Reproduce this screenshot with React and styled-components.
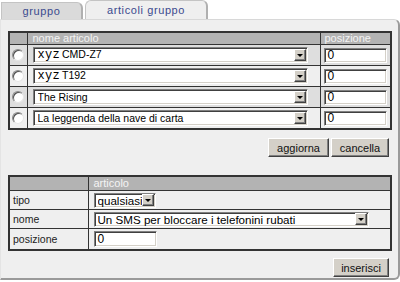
import React from "react";
import styled, { createGlobalStyle } from "styled-components";

const GlobalStyle = createGlobalStyle`
  body {
    margin: 0;
    background: #ffffff;
    font-family: "Liberation Sans", Arial, sans-serif;
  }
`;

const Page = styled.div`
  width: 400px;
  height: 282px;
  overflow: hidden;
`;

const TabBar = styled.div`
  display: flex;
  align-items: flex-end;
  height: 19px;
  padding-left: 1px;
`;

const Tab = styled.div`
  display: flex;
  align-items: center;
  justify-content: center;
  box-sizing: border-box;
  width: ${(p) => p.w}px;
  height: ${(p) => (p.active ? 19 : 17)}px;
  margin-right: 2px;
  background: ${(p) => (p.active ? "#efefef" : "#dadada")};
  border: 1px solid #c4c4c4;
  border-bottom: none;
  border-right: 2px solid #b0b0b0;
  border-radius: ${(p) => (p.active ? "6px 6px 0 0" : "0 6px 0 0")};
  color: #3b4a8e;
  font-size: 11px;
  letter-spacing: 0.6px;
  padding-bottom: 1px;
`;

const Panel = styled.div`
  box-sizing: border-box;
  width: 400px;
  height: 261px;
  background: #efefef;
  border-top: 1px solid #d8d8d8;
  border-left: 1px solid #e4e4e4;
  border-right: 2px solid #9a9a9a;
  border-bottom: 2px solid #9a9a9a;
  border-radius: 0 6px 6px 0;
  padding: 11px 7px 0 7px;
`;

const Grid = styled.table`
  width: 382px;
  border-collapse: collapse;
  border: 2px solid #333;
  table-layout: fixed;
`;

const HeadCell = styled.th`
  height: ${(p) => p.h}px;
  padding: 0 0 0 ${(p) => p.pl || 0}px;
  background: #b3b3b3;
  color: #f4f4f4;
  font-weight: normal;
  font-size: 11px;
  text-align: left;
  border: 1px solid #333;
  vertical-align: middle;
  line-height: 1;
`;

const Cell = styled.td`
  height: ${(p) => p.h}px;
  padding: 0 0 0 ${(p) => p.pl || 0}px;
  border: 1px solid #333;
  background: ${(p) => (p.shade ? "#dedede" : "#efefef")};
  vertical-align: middle;
  font-size: 10.5px;
  color: #222;
`;

const Radio = styled.span`
  display: block;
  box-sizing: border-box;
  width: 12px;
  height: 12px;
  margin: 0 auto;
  border-radius: 50%;
  background: #fff;
  border: 1px solid #8a8a8a;
  border-right-color: #e6e6e6;
  border-bottom-color: #e6e6e6;
  box-shadow: inset 1px 1px 0 #505050;
`;

const Select = styled.div`
  display: flex;
  align-items: center;
  box-sizing: border-box;
  width: ${(p) => p.w}px;
  height: ${(p) => p.h || 16}px;
  background: #fff;
  border: 1px solid #808080;
  border-right-color: #fff;
  border-bottom-color: #fff;
  box-shadow: inset 1px 1px 0 #404040, inset -1px -1px 0 #d4d0c8;
  padding: 0 1px 0 ${(p) => p.pl || 4}px;
  font-size: ${(p) => p.fs || 10.5}px;
  color: #000;
  white-space: nowrap;
`;

const SelectText = styled.span`
  flex: 1;
  overflow: hidden;
`;

const Mono = styled.span`
  font-family: "Liberation Mono", "Courier New", monospace;
  font-size: 12px;
  letter-spacing: 0.3px;
  margin-right: 2px;
`;

const Arrow = styled.span`
  display: flex;
  align-items: center;
  justify-content: center;
  flex-shrink: 0;
  box-sizing: border-box;
  width: 12px;
  height: 12px;
  background: #d4d0c8;
  border: 1px solid #fff;
  border-right-color: #404040;
  border-bottom-color: #404040;
  box-shadow: inset -1px -1px 0 #808080;

  &::after {
    content: "";
    border-left: 3px solid transparent;
    border-right: 3px solid transparent;
    border-top: 3px solid #000;
  }
`;

const Field = styled.div`
  box-sizing: border-box;
  width: ${(p) => p.w}px;
  height: ${(p) => p.h || 15}px;
  background: #fff;
  border: 1px solid #808080;
  border-right-color: #fff;
  border-bottom-color: #fff;
  box-shadow: inset 1px 1px 0 #404040, inset -1px -1px 0 #d4d0c8;
  padding: 0 3px;
  font-size: 12px;
  line-height: ${(p) => (p.h || 15) - 2}px;
  color: #000;
`;

const Actions = styled.div`
  display: flex;
  justify-content: flex-end;
  gap: 2px;
  padding-right: 2px;
  margin: ${(p) => p.m};
`;

const Button = styled.button`
  box-sizing: border-box;
  width: ${(p) => p.w}px;
  height: 19px;
  padding: 0;
  background: #d4d0c8;
  border: 1px solid #fff;
  border-right-color: #404040;
  border-bottom-color: #404040;
  box-shadow: inset -1px -1px 0 #808080;
  font-family: "Liberation Sans", Arial, sans-serif;
  font-size: 11px;
  color: #111;
`;

const articoli = [
  { mono: "xyz", name: "CMD-Z7" },
  { mono: "xyz", name: "T192" },
  { name: "The Rising" },
  { name: "La leggenda della nave di carta" },
];

const App = () => (
  <Page>
    <GlobalStyle />
    <TabBar>
      <Tab w={82}>gruppo</Tab>
      <Tab w={123} active>
        articoli gruppo
      </Tab>
    </TabBar>
    <Panel>
      <Grid>
        <colgroup>
          <col style={{ width: 18 }} />
          <col style={{ width: 293 }} />
          <col style={{ width: 71 }} />
        </colgroup>
        <thead>
          <tr>
            <HeadCell h={10} />
            <HeadCell h={10} pl={5}>
              nome articolo
            </HeadCell>
            <HeadCell h={10} pl={4}>
              posizione
            </HeadCell>
          </tr>
        </thead>
        <tbody>
          {articoli.map((a, i) => (
            <tr key={i}>
              <Cell h={20} shade={i % 2 === 0}>
                <Radio />
              </Cell>
              <Cell h={20} pl={5} shade={i % 2 === 0}>
                <Select w={275}>
                  <SelectText>
                    {a.mono && <Mono>{a.mono}</Mono>}
                    {a.name}
                  </SelectText>
                  <Arrow />
                </Select>
              </Cell>
              <Cell h={20} pl={3} shade={i % 2 === 0}>
                <Field w={63}>0</Field>
              </Cell>
            </tr>
          ))}
        </tbody>
      </Grid>

      <Actions m="8px 0 18px 0">
        <Button w={61}>aggiorna</Button>
        <Button w={58}>cancella</Button>
      </Actions>

      <Grid>
        <colgroup>
          <col style={{ width: 79 }} />
          <col style={{ width: 303 }} />
        </colgroup>
        <thead>
          <tr>
            <HeadCell h={13} />
            <HeadCell h={13} pl={5}>
              articolo
            </HeadCell>
          </tr>
        </thead>
        <tbody>
          <tr>
            <Cell h={18} pl={3}>
              tipo
            </Cell>
            <Cell h={18} pl={5}>
              <Select w={62} h={15} fs={11.6} pl={3}>
                <SelectText>qualsiasi</SelectText>
                <Arrow />
              </Select>
            </Cell>
          </tr>
          <tr>
            <Cell h={18} pl={3}>
              nome
            </Cell>
            <Cell h={18} pl={5}>
              <Select w={275} h={15} fs={11.6} pl={3}>
                <SelectText>Un SMS per bloccare i telefonini rubati</SelectText>
                <Arrow />
              </Select>
            </Cell>
          </tr>
          <tr>
            <Cell h={20} pl={3}>
              posizione
            </Cell>
            <Cell h={20} pl={5}>
              <Field w={63} h={16}>
                0
              </Field>
            </Cell>
          </tr>
        </tbody>
      </Grid>

      <Actions m="7px 0 0 0">
        <Button w={56}>inserisci</Button>
      </Actions>
    </Panel>
  </Page>
);

export default App;
